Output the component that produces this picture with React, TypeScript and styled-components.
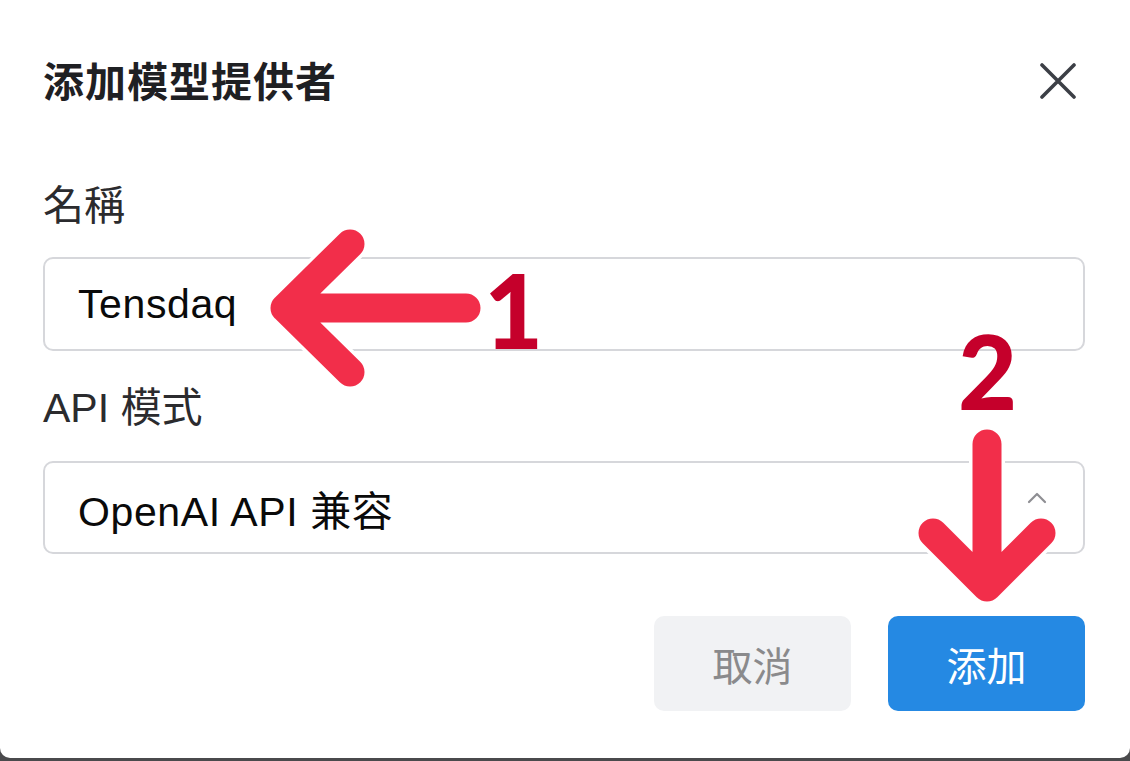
import React from 'react';
import styled, { createGlobalStyle } from 'styled-components';

const UI_FONT = '"Liberation Sans", "Noto Sans CJK TC", "Noto Sans CJK SC", sans-serif';
const CJK_FONT = '"Noto Sans CJK TC", "Noto Sans CJK SC", sans-serif';
const ARROW_RED = '#f22e4a';
const NUMBER_RED = '#c5002b';

const GlobalStyle = createGlobalStyle`
  html, body {
    margin: 0;
    padding: 0;
    background: #4a4a4c;
  }
  body {
    width: 1130px;
    height: 761px;
    overflow: hidden;
  }
`;

const Dialog = styled.div`
  position: relative;
  box-sizing: border-box;
  width: 1130px;
  height: 758px;
  background: #ffffff;
  border-radius: 0 0 10px 10px;
  padding: 49px 45px 0 43px;
  font-family: ${UI_FONT};
`;

const Header = styled.div`
  display: flex;
  align-items: center;
  justify-content: space-between;
  height: 60px;
`;

const Title = styled.h1`
  margin: 0;
  font-family: ${CJK_FONT};
  font-size: 41px;
  font-weight: 700;
  color: #1f2023;
  letter-spacing: 1px;
`;

const CloseButton = styled.button`
  display: flex;
  align-items: center;
  justify-content: center;
  width: 44px;
  height: 44px;
  margin: 4px 5px 0 0;
  padding: 0;
  border: none;
  background: transparent;
`;

const Field = styled.div<{ $top: number; $gap: number }>`
  display: flex;
  flex-direction: column;
  gap: ${(p) => p.$gap}px;
  margin-top: ${(p) => p.$top}px;
`;

const Label = styled.label`
  font-family: ${UI_FONT};
  font-size: 41px;
  line-height: 50px;
  color: #2b2b2e;
`;

const Box = styled.div<{ $height: number }>`
  box-sizing: border-box;
  display: flex;
  align-items: center;
  justify-content: space-between;
  height: ${(p) => p.$height}px;
  padding: 0 36px 0 33px;
  border: 2px solid #d6d7db;
  border-radius: 10px;
  font-size: 41px;
  letter-spacing: 0.6px;
  color: #0a0a0a;
`;

const Chevron = styled.svg`
  margin-top: -20px;
`;

const Footer = styled.div`
  display: flex;
  justify-content: flex-end;
  gap: 37px;
  margin-top: 62px;
`;

const Button = styled.button<{ $primary?: boolean }>`
  width: 197px;
  height: 95px;
  border: none;
  border-radius: 10px;
  font-family: ${CJK_FONT};
  font-size: 40px;
  background: ${(p) => (p.$primary ? '#2589e3' : '#f1f2f4')};
  color: ${(p) => (p.$primary ? '#ffffff' : '#8a8a8c')};
`;

const Overlay = styled.svg`
  position: absolute;
  top: 0;
  left: 0;
  pointer-events: none;
`;

const StepNumber = styled.span<{ $x: number; $y: number }>`
  position: absolute;
  left: ${(p) => p.$x}px;
  top: ${(p) => p.$y}px;
  font-family: Lato, "Open Sans", sans-serif;
  font-weight: 900;
  font-size: 102px;
  line-height: 1;
  color: ${NUMBER_RED};
`;

const Arrow: React.FC<{ d: string }> = ({ d }) => (
  <>
    <path d={d} fill="none" stroke="#ffffff" strokeWidth={36} strokeLinecap="round" strokeLinejoin="round" />
    <path d={d} fill="none" stroke={ARROW_RED} strokeWidth={29} strokeLinecap="round" strokeLinejoin="round" />
  </>
);

export default function App() {
  return (
    <>
      <GlobalStyle />
      <Dialog>
        <Header>
          <Title>添加模型提供者</Title>
          <CloseButton aria-label="關閉">
            <svg width="36" height="36" viewBox="0 0 36 36">
              <path d="M2 2 L34 34 M34 2 L2 34" stroke="#3c3f46" strokeWidth="3.6" strokeLinecap="round" />
            </svg>
          </CloseButton>
        </Header>

        <Field $top={72} $gap={26}>
          <Label>名稱</Label>
          <Box $height={94}>Tensdaq</Box>
        </Field>

        <Field $top={32} $gap={28}>
          <Label>API 模式</Label>
          <Box $height={93}>
            <span>OpenAI API 兼容</span>
            <Chevron width="20" height="12" viewBox="0 0 20 12">
              <path d="M2 10 L10 2 L18 10" fill="none" stroke="#8e8e93" strokeWidth="2.2" strokeLinecap="round" strokeLinejoin="round" />
            </Chevron>
          </Box>
        </Field>

        <Footer>
          <Button>取消</Button>
          <Button $primary>添加</Button>
        </Footer>

        <Overlay width="1130" height="758" viewBox="0 0 1130 758">
          <Arrow d="M466 308 L285 308 M350 244 L285 308 L350 372" />
          <Arrow d="M987 444 L987 587 M933 533 L987 587 L1041 533" />
        </Overlay>
        <StepNumber $x={484} $y={259}>1</StepNumber>
        <StepNumber $x={958} $y={320}>2</StepNumber>
      </Dialog>
    </>
  );
}
